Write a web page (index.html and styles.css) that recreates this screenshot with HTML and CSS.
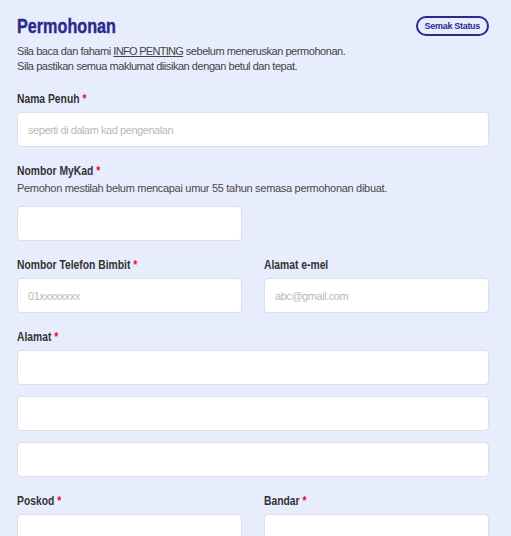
FILE: index.html
```html
<!DOCTYPE html>
<html lang="ms">
<head>
<meta charset="utf-8">
<title>Permohonan</title>
<link rel="stylesheet" href="styles.css">
</head>
<body>
<main class="page">
  <header class="head">
    <h1 class="title"><span class="narrow">Permohonan</span></h1>
    <button class="status-btn" type="button">Semak Status</button>
  </header>
  <p class="intro">Sila baca dan fahami <a href="#" class="link">INFO PENTING</a> sebelum meneruskan permohonan.<br>Sila pastikan semua maklumat diisikan dengan betul dan tepat.</p>

  <div class="field">
    <label class="label"><span class="narrow">Nama Penuh <span class="req">*</span></span></label>
    <input class="input" type="text" placeholder="seperti di dalam kad pengenalan">
  </div>

  <div class="field">
    <label class="label"><span class="narrow">Nombor MyKad <span class="req">*</span></span></label>
    <p class="hint">Pemohon mestilah belum mencapai umur 55 tahun semasa permohonan dibuat.</p>
    <div class="row">
      <input class="input" type="text">
      <span></span>
    </div>
  </div>

  <div class="row">
    <div class="field">
      <label class="label"><span class="narrow">Nombor Telefon Bimbit <span class="req">*</span></span></label>
      <input class="input" type="text" placeholder="01xxxxxxxx">
    </div>
    <div class="field">
      <label class="label"><span class="narrow">Alamat e-mel</span></label>
      <input class="input" type="text" placeholder="abc@gmail.com">
    </div>
  </div>

  <div class="field">
    <label class="label"><span class="narrow">Alamat <span class="req">*</span></span></label>
    <div class="stack">
      <input class="input" type="text">
      <input class="input" type="text">
      <input class="input" type="text">
    </div>
  </div>

  <div class="row">
    <div class="field">
      <label class="label"><span class="narrow">Poskod <span class="req">*</span></span></label>
      <input class="input" type="text">
    </div>
    <div class="field">
      <label class="label"><span class="narrow">Bandar <span class="req">*</span></span></label>
      <input class="input" type="text">
    </div>
  </div>
</main>
</body>
</html>
```

FILE: styles.css
```css
html, body {
  margin: 0;
  padding: 0;
  background: #e8edfd;
}
body {
  font-family: "Liberation Sans", Arial, sans-serif;
  color: #444;
}
.page {
  padding: 15px 22px 0 17px;
}
.head {
  display: flex;
  justify-content: space-between;
  align-items: center;
}
.narrow {
  display: inline-block;
  transform-origin: left center;
  white-space: nowrap;
}
.title {
  margin: 0;
  font-family: "Liberation Sans", Arial, sans-serif;
  font-weight: 700;
  font-size: 20px;
  line-height: 22px;
  color: #2b2a8c;
  -webkit-text-stroke: 0.4px #2b2a8c;
}
.title .narrow {
  transform: scaleX(0.81);
}
.status-btn {
  font-family: "Liberation Sans", Arial, sans-serif;
  font-weight: 700;
  font-size: 9px;
  letter-spacing: -0.3px;
  color: #2b2a8c;
  background: transparent;
  border: 2px solid #2b2a8c;
  border-radius: 999px;
  padding: 0 7px;
  height: 20px;
  line-height: 16px;
}
.intro {
  margin: 7px 0 0;
  padding-bottom: 1px;
  font-size: 11px;
  line-height: 15px;
  letter-spacing: -0.45px;
  color: #444;
}
.link {
  color: #444;
  text-decoration: underline;
  letter-spacing: -0.7px;
}
.field {
  margin-top: 17px;
  display: flex;
  flex-direction: column;
}
.row .field {
  margin-top: 0;
}
.row {
  display: grid;
  grid-template-columns: 1fr 1fr;
  column-gap: 22px;
}
.field > .row {
  margin-top: 0;
}
.row + .row, .field + .row {
  margin-top: 17px;
}
.label {
  font-family: "Liberation Sans", Arial, sans-serif;
  font-weight: 700;
  font-size: 12px;
  line-height: 14px;
  color: #333;
  margin-bottom: 6px;
}
.label .narrow {
  transform: scaleX(0.86);
}
.req {
  color: #e0102a;
}
.hint {
  margin: -3px 0 10px;
  font-size: 11px;
  line-height: 15px;
  letter-spacing: -0.3px;
  color: #484848;
}
.input {
  box-sizing: border-box;
  width: 100%;
  height: 35px;
  border: 1px solid #dcdfe8;
  border-radius: 4px;
  background: #fff;
  padding: 0 10px;
  font-family: "Liberation Sans", Arial, sans-serif;
  font-size: 11px;
  letter-spacing: -0.45px;
  color: #333;
  margin: 0;
}
.input::placeholder {
  color: #b9b9b9;
}
.stack {
  display: flex;
  flex-direction: column;
  gap: 11px;
}
```
